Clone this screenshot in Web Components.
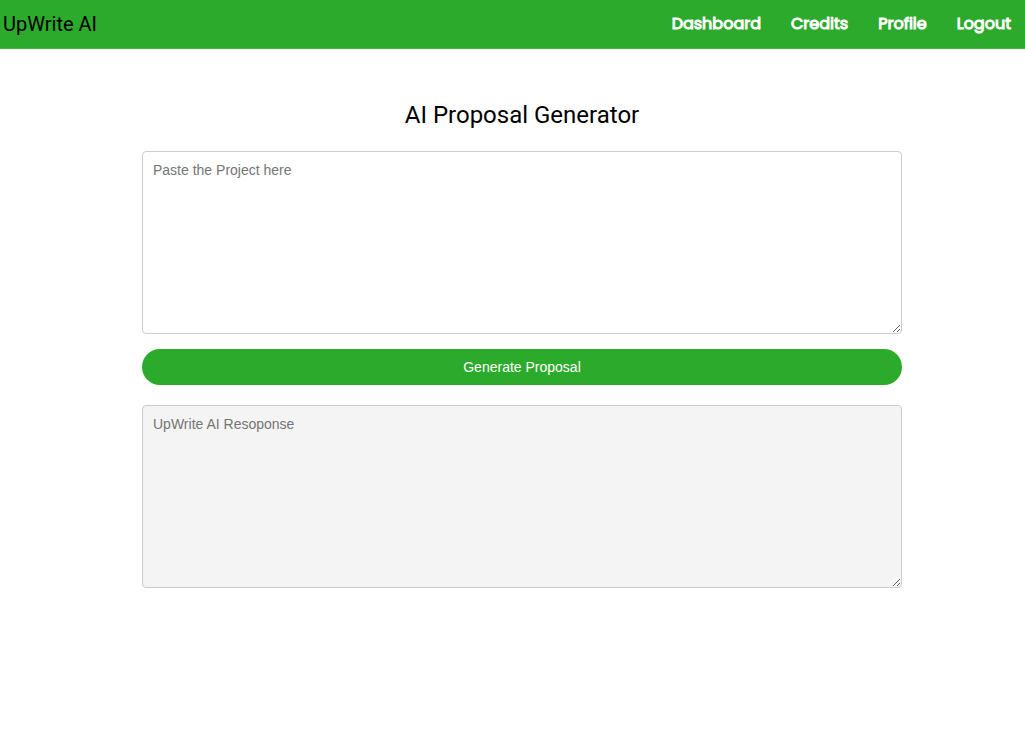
<!DOCTYPE html>
<html lang="en">
<head>
    <meta charset="UTF-8">
    <meta name="viewport" content="width=device-width, initial-scale=1.0">
    <title>UpWrite AI</title>
    <style>
        body {
            --brand: #2caa2b;
            margin: 0;
            background: #fff;
            color: #000;
            font-family: Roboto, "Liberation Sans", sans-serif;
        }
    </style>
</head>
<body>
    <site-header brand="UpWrite AI">
        <nav-link href="#dashboard">Dashboard</nav-link>
        <nav-link href="#credits">Credits</nav-link>
        <nav-link href="#profile">Profile</nav-link>
        <nav-link href="#logout">Logout</nav-link>
    </site-header>
    <proposal-generator>AI Proposal Generator</proposal-generator>

    <!-- Header Template -->
    <template id="site-header-template">
        <style>
            :host {
                display: block;
            }
            header {
                display: flex;
                align-items: center;
                justify-content: space-between;
                height: 48px;
                padding: 0 14px 0 3px;
                background: var(--brand);
                border-bottom: 1px solid #44b443;
            }
            .brand {
                font-size: 20px;
                line-height: 24px;
            }
            nav {
                display: flex;
                gap: 30px;
            }
        </style>
        <header>
            <span class="brand"></span>
            <nav><slot></slot></nav>
        </header>
    </template>

    <!-- Nav Link Template -->
    <template id="nav-link-template">
        <style>
            :host {
                display: block;
            }
            a {
                color: #fff;
                font: 400 16px/24px Poppins, Lato, "Liberation Sans", sans-serif;
                -webkit-text-stroke: 1px #fff;
                text-decoration: none;
            }
        </style>
        <a><slot></slot></a>
    </template>

    <!-- Proposal Generator Template -->
    <template id="proposal-generator-template">
        <style>
            :host {
                display: block;
                padding: 50px 0 0 19px;
            }
            form {
                width: 760px;
                max-width: 90%;
                margin: 0 auto;
                display: flex;
                flex-direction: column;
            }
            h1 {
                margin: 0 0 20px;
                font-size: 24px;
                font-weight: 400;
                line-height: 32px;
                text-align: center;
            }
            textarea {
                box-sizing: border-box;
                width: 100%;
                height: 183px;
                padding: 10px;
                border: 1px solid #ccc;
                border-radius: 4px;
                background: #fff;
                font: 14px/16px "Liberation Sans", Arial, sans-serif;
                resize: both;
            }
            textarea[readonly] {
                background: #f4f4f4;
            }
            button {
                height: 36px;
                margin: 15px 0 20px;
                padding: 0 20px;
                border: 0;
                border-radius: 18px;
                background: var(--brand);
                color: #fff;
                font: 14px/16px "Liberation Sans", Arial, sans-serif;
                cursor: pointer;
            }
        </style>
        <form>
            <h1><slot></slot></h1>
            <textarea aria-label="Project" placeholder="Paste the Project here"></textarea>
            <button type="submit">Generate Proposal</button>
            <textarea aria-label="Response" placeholder="UpWrite AI Resoponse" readonly></textarea>
        </form>
    </template>

    <script>
        // Header Component
        class SiteHeader extends HTMLElement {
            constructor() {
                super();
                this.attachShadow({ mode: 'open' });
            }

            connectedCallback() {
                const template = document.getElementById('site-header-template');
                const content = template.content.cloneNode(true);

                content.querySelector('.brand').textContent = this.getAttribute('brand');
                this.shadowRoot.replaceChildren(content);
            }
        }

        // Nav Link Component
        class NavLink extends HTMLElement {
            constructor() {
                super();
                this.attachShadow({ mode: 'open' });
            }

            connectedCallback() {
                const template = document.getElementById('nav-link-template');
                const content = template.content.cloneNode(true);

                content.querySelector('a').setAttribute('href', this.getAttribute('href'));
                this.shadowRoot.replaceChildren(content);
            }
        }

        // Proposal Generator Component
        class ProposalGenerator extends HTMLElement {
            constructor() {
                super();
                this.attachShadow({ mode: 'open' });
            }

            connectedCallback() {
                const template = document.getElementById('proposal-generator-template');

                this.shadowRoot.replaceChildren(template.content.cloneNode(true));
                this.shadowRoot.querySelector('form').addEventListener('submit', event => {
                    event.preventDefault();
                });
            }
        }

        // Define custom elements
        customElements.define('site-header', SiteHeader);
        customElements.define('nav-link', NavLink);
        customElements.define('proposal-generator', ProposalGenerator);
    </script>
</body>
</html>
